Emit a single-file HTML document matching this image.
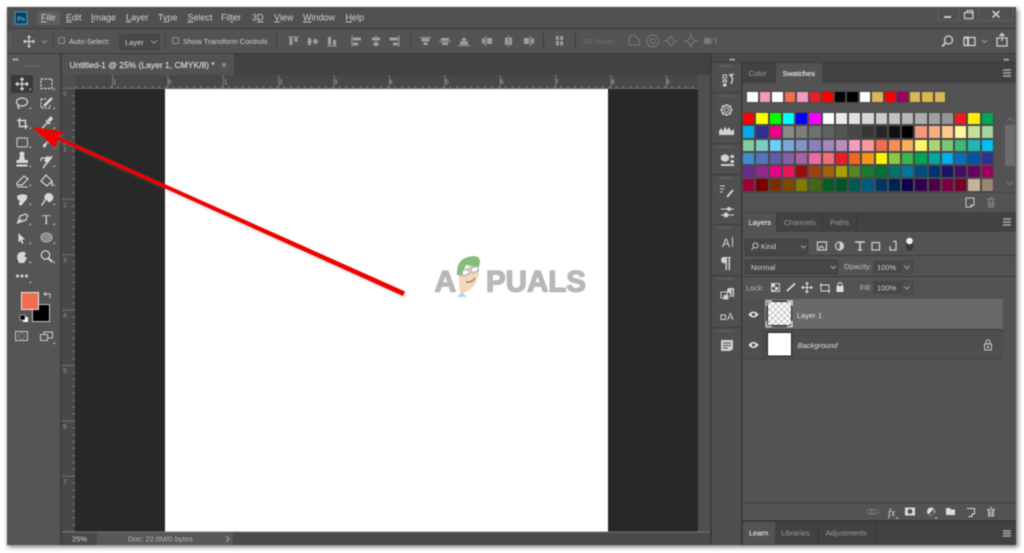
<!DOCTYPE html>
<html><head><meta charset="utf-8">
<style>
html,body{margin:0;padding:0;width:1024px;height:553px;overflow:hidden;background:#fff}
#root{position:absolute;left:0;top:0;width:1024px;height:553px;filter:blur(.5px)}
svg{position:absolute;left:0;top:0}
text{font-family:"Liberation Sans",sans-serif;font-size:9px;fill:#d0d0d0}
.sw{position:absolute;display:grid;gap:0}
.sw i{display:block;box-sizing:border-box;border:1px solid #4a4a4a}
#g{left:742px;top:112px;grid-template-columns:repeat(19,13.25px);grid-auto-rows:13.25px}
#r{left:746px;top:90.5px;grid-template-columns:repeat(16,12.5px);grid-auto-rows:12.5px;background:#444}
</style></head><body><div id="root">
<svg width="1024" height="553" viewBox="0 0 1024 553">
<defs>
<pattern id="tx" x="62" y="75" width="6.925" height="14" patternUnits="userSpaceOnUse"><rect x="0" y="11" width="1" height="3" fill="#8a8a8a"/></pattern>
<pattern id="ty" x="62" y="88" width="14" height="6.925" patternUnits="userSpaceOnUse"><rect x="10" y="0" width="3" height="1" fill="#777"/></pattern>
<pattern id="mx" x="56.6" y="75" width="55.4" height="14" patternUnits="userSpaceOnUse"><rect x="0" y="0" width="1" height="14" fill="#7a7a7a"/></pattern>
<pattern id="my" x="62" y="88" width="14" height="55.4" patternUnits="userSpaceOnUse"><rect x="0" y="0" width="13" height="1" fill="#707070"/></pattern>
<pattern id="ck" width="6" height="6" patternUnits="userSpaceOnUse" x="768" y="302"><rect width="6" height="6" fill="#fff"/><rect width="3" height="3" fill="#ccc"/><rect x="3" y="3" width="3" height="3" fill="#ccc"/></pattern>
<filter id="sh" x="-5%" y="-5%" width="110%" height="110%"><feGaussianBlur stdDeviation="2.5"/></filter>
<filter id="as" x="-5%" y="-10%" width="110%" height="120%"><feGaussianBlur stdDeviation="1.5"/></filter>
</defs>
<!-- window shadow -->
<rect x="8" y="9" width="1010" height="538" fill="#555" filter="url(#sh)" opacity=".8"/>
<rect x="7" y="7" width="1009" height="538" fill="#535353"/>
<rect x="7" y="7" width="1009" height="21" fill="#505050"/>
<rect x="7" y="28" width="1009" height="1" fill="#3c3c3c"/>
<rect x="7" y="29" width="1009" height="24" fill="#535353"/>
<rect x="7" y="53" width="1009" height="1" fill="#3c3c3c"/>

<!-- PS logo -->
<rect x="15" y="12" width="12" height="12" fill="#0f3e58" stroke="#2ea3d6" stroke-width="1"/>
<text x="17.2" y="20.8" style="font-size:6.5px;font-weight:bold;fill:#3fb3e6">Ps</text>
<rect x="37" y="11" width="23" height="14" rx="1" fill="#5e5e5e"/>
<g style="font-size:9px">
<text x="41" y="20.5"><tspan text-decoration="underline">F</tspan>ile</text>
<text x="66" y="20.5"><tspan text-decoration="underline">E</tspan>dit</text>
<text x="91" y="20.5"><tspan text-decoration="underline">I</tspan>mage</text>
<text x="126" y="20.5"><tspan text-decoration="underline">L</tspan>ayer</text>
<text x="158" y="20.5">T<tspan text-decoration="underline">y</tspan>pe</text>
<text x="187.500" y="20.5"><tspan text-decoration="underline">S</tspan>elect</text>
<text x="221" y="20.5">Fil<tspan text-decoration="underline">t</tspan>er</text>
<text x="252" y="20.5">3<tspan text-decoration="underline">D</tspan></text>
<text x="274" y="20.5"><tspan text-decoration="underline">V</tspan>iew</text>
<text x="303" y="20.5"><tspan text-decoration="underline">W</tspan>indow</text>
<text x="345.500" y="20.5"><tspan text-decoration="underline">H</tspan>elp</text>
</g>
<!-- window controls -->
<path d="M938 7.500V20.500H1013V7.500" fill="none" stroke="#5f5f5f"/>
<path d="M958.500 8V20M978.500 8V20" stroke="#5f5f5f"/>
<rect x="944" y="16" width="7" height="2" fill="#c8c8c8"/>
<path d="M964.500 12.500H973V18.500H964.500ZM967 12.500V10.500H972.500V15" fill="none" stroke="#c8c8c8" stroke-width="1.200"/>
<path d="M992.500 11L999.500 17.500M999.500 11L992.500 17.500" stroke="#c8c8c8" stroke-width="1.800"/>

<!-- options bar -->
<path d="M10 33V50" stroke="#666" stroke-dasharray="1 1" stroke-width="2"/>
<g fill="none" stroke="#d0d0d0" stroke-width="1.200"><path d="M29 36V47M23.500 41.500H34.500"/></g>
<path d="M29 35L26.800 37.500H31.200ZM29 48L26.800 45.500H31.200ZM23 41.500L25.500 39.300V43.700ZM35 41.500L32.500 39.300V43.700Z" fill="#d0d0d0"/>
<path d="M42 40.500L44.500 43L47 40.500" fill="none" stroke="#9a9a9a"/>
<path d="M53.500 33V49" stroke="#3c3c3c"/>
<rect x="58.500" y="37.500" width="6" height="6" rx="1" fill="none" stroke="#909090"/>
<text x="69" y="44" style="font-size:7.500px">Auto-Select:</text>
<rect x="119.500" y="34.500" width="40" height="15" rx="1" fill="#484848" stroke="#444"/>
<text x="125" y="45" style="font-size:7.500px">Layer</text>
<path d="M151 40.500L154 43L157 40.500" fill="none" stroke="#9a9a9a"/>
<path d="M165.500 33V49" stroke="#3c3c3c"/>
<rect x="172.500" y="37.500" width="6" height="6" rx="1" fill="none" stroke="#909090"/>
<text x="183" y="44" style="font-size:7.500px">Show Transform Controls</text>
<path d="M276.500 33V49" stroke="#3c3c3c"/>
<g fill="#a0a0a0">
<path d="M288 36.500H299V37.500H288ZM289.500 38H292.500V45H289.500ZM294.500 38H297.500V42H294.500Z"/>
<path d="M307 41H319V42H307ZM308 38H311V45H308ZM314 39H317V44H314Z"/>
<path d="M327 45.500H337V46.500H327ZM328 37H331V45H328ZM333 40H336V45H333Z"/>
<path d="M351.500 35.500H352.500V46.500H351.500ZM353 37.500H361V40.500H353ZM353 42.500H358V45.500H353Z"/>
<path d="M375.500 35.500H376.500V46.500H375.500ZM372 37.500H380V40.500H372ZM373.500 42.500H378.500V45.500H373.500Z"/>
<path d="M398.500 35.500H399.500V46.500H398.500ZM389.500 37.500H398V40.500H389.500ZM393 42.500H398V45.500H393Z"/>
</g>
<path d="M410.500 33V49" stroke="#3c3c3c"/>
<g fill="#a0a0a0">
<path d="M420 37H431V38H420ZM421.500 38.500H429.500V41.500H421.500ZM423.500 42.500H427.500V45H423.500Z"/>
<path d="M439 41H451V42H439ZM441 38H449V40.500H441ZM442 42.500H448V45H442Z"/>
<path d="M458 45H470V46H458ZM460 41.500H468V44.500H460ZM462 38H466V41H462Z"/>
<path d="M485 36H486V46H485ZM487 38H492V44H487ZM482 38.500H484.500V43.500H482Z"/>
<path d="M508 35.500H509V47H508ZM505 37.500H507.500V45H505ZM509.500 37.500H512V45H509.500Z"/>
<path d="M530 36H531V46H530ZM524 38H529V44H524ZM531.500 38.500H534V43.500H531.500Z"/>
</g>
<path d="M543.500 33V49" stroke="#3c3c3c"/>
<path d="M556 36H563V40H556ZM556 41H563V45.500H556Z" fill="#a0a0a0"/>
<path d="M559.500 36V46" stroke="#535353" stroke-width="1.500"/>
<path d="M575.500 33V49" stroke="#3c3c3c"/>
<text x="583" y="44" style="font-size:7.500px;fill:#6c6c72">3D Mode:</text>
<g fill="none" stroke="#7a7a7a" stroke-width="1">
<path d="M629 41A4 4 0 0 1 637 38A5 5 0 0 1 639 45H631A2.500 2.500 0 0 1 629 41Z"/>
<circle cx="652.500" cy="41" r="6"/><circle cx="652.500" cy="41" r="2.500"/>
<path d="M671 36L675 41L671 46L667 41ZM664 41H667M675 41H678"/>
<path d="M691 37L695 41L691 45L687 41ZM691 33V37M691 45V48M683 41H687M695 41H698"/>
</g>
<rect x="704" y="38" width="7" height="6" fill="#7a7a7a"/><path d="M711 41L716 38V44" fill="none" stroke="#7a7a7a"/>
<!-- right opts -->
<g fill="none" stroke="#d0d0d0" stroke-width="1.300">
<circle cx="948.500" cy="40" r="4"/><path d="M945.500 43L942 46.500" stroke-width="1.800"/>
<rect x="964" y="37.500" width="11" height="8"/><path d="M964.500 37.500H968V45.500" stroke-width="2"/>
<path d="M982 40L984.500 42.500L987 40" stroke="#a0a0a0" stroke-width="1"/>
<path d="M1001 38H997V46H1007V38H1003M1002 41V34M999.500 36L1002 33.500L1004.500 36"/>
</g>

<!-- top panel header strips -->
<rect x="7" y="54" width="54" height="491" fill="#555"/>
<rect x="60" y="54" width="2" height="491" fill="#3f3f3f"/>
<text x="12" y="61" style="font-size:6px;fill:#c0c0c0">◂◂</text>
<path d="M24 66H40" stroke="#6e6e6e" stroke-width="2" stroke-dasharray="1.500 1"/>

<!-- doc tab row -->
<rect x="62" y="54" width="650" height="21" fill="#424242"/>
<rect x="62" y="54" width="172" height="21" fill="#525252"/>
<text x="69.500" y="68" style="font-size:8.500px;fill:#dedede;stroke:#dedede;stroke-width:.15">Untitled-1 @ 25% (Layer 1, CMYK/8) *</text>
<path d="M222 63L226 67M226 63L222 67" stroke="#9a9a9a" stroke-width="1.200"/>

<!-- rulers -->
<rect x="62" y="75" width="650" height="14" fill="#484848"/>
<rect x="62" y="75" width="13" height="470" fill="#484848"/>
<rect x="62" y="75" width="13" height="13" fill="#4f4f4f"/>
<rect x="75" y="75" width="623" height="14" fill="url(#tx)"/>
<rect x="75" y="75" width="623" height="14" fill="url(#mx)"/>
<rect x="62" y="88" width="13" height="444" fill="url(#ty)"/>
<rect x="62" y="88" width="13" height="444" fill="url(#my)"/>
<g>
<text x="113" y="84" style="font-size:6.500px;fill:#b0b0b0">1</text><text x="168" y="84" style="font-size:6.500px;fill:#b0b0b0">0</text><text x="224" y="84" style="font-size:6.500px;fill:#b0b0b0">1</text><text x="279" y="84" style="font-size:6.500px;fill:#b0b0b0">2</text><text x="334" y="84" style="font-size:6.500px;fill:#b0b0b0">3</text><text x="389" y="84" style="font-size:6.500px;fill:#b0b0b0">4</text><text x="445" y="84" style="font-size:6.500px;fill:#b0b0b0">5</text><text x="500" y="84" style="font-size:6.500px;fill:#b0b0b0">6</text><text x="555" y="84" style="font-size:6.500px;fill:#b0b0b0">7</text><text x="611" y="84" style="font-size:6.500px;fill:#b0b0b0">8</text><text x="666" y="84" style="font-size:6.500px;fill:#b0b0b0">9</text>
<text x="63" y="96" style="font-size:6.500px;fill:#9a9a9a">0</text><text x="63" y="151.500" style="font-size:6.500px;fill:#9a9a9a">1</text><text x="63" y="207" style="font-size:6.500px;fill:#9a9a9a">2</text><text x="63" y="262" style="font-size:6.500px;fill:#9a9a9a">3</text><text x="63" y="317.500" style="font-size:6.500px;fill:#9a9a9a">4</text><text x="63" y="373" style="font-size:6.500px;fill:#9a9a9a">5</text><text x="63" y="428.500" style="font-size:6.500px;fill:#9a9a9a">6</text><text x="63" y="484" style="font-size:6.500px;fill:#9a9a9a">7</text>
</g>
<!-- canvas -->
<rect x="75" y="88" width="623" height="444" fill="#282828"/>
<rect x="75" y="88" width="623" height="1" fill="#6a6a6a"/>
<rect x="165" y="89" width="443" height="443" fill="#fff"/>
<rect x="698" y="75" width="14" height="470" fill="#4f4f4f"/>
<!-- status bar -->
<rect x="62" y="532" width="650" height="13" fill="#4a4a4a"/>
<rect x="97" y="532" width="136" height="13" fill="#585858"/>
<rect x="62" y="531.500" width="650" height="1" fill="#777"/>
<text x="72" y="541.500" style="font-size:7.500px">25%</text>
<text x="128" y="541.500" style="font-size:7.500px;fill:#b8b8b8">Doc: 22.0M/0 bytes</text>
<path d="M226 536L229 539L226 542" fill="none" stroke="#aaa"/>

<!-- toolbar icons -->
<rect x="11" y="75" width="22" height="18" rx="1" fill="#3a3a3a"/>
<g fill="none" stroke="#d8d8d8" stroke-width="1.200">
<path d="M22 78.500V89.500M16.500 84H27.500"/>
<rect x="41" y="79" width="11" height="9.500" stroke-dasharray="2.500 1.200"/>
<ellipse cx="22" cy="102" rx="5.500" ry="4"/><path d="M18 105Q17 109 20 108"/>
<path d="M41 99H46M41 99V108H50V105" stroke-dasharray="2 1.200"/><path d="M44 106L52 98" stroke-width="2.500"/>
<path d="M19.500 118V126.500H28M17 120.500H25.500V129" stroke-width="1.500"/>
<path d="M41.500 129L48 122" stroke-width="1.300"/><path d="M46 120.500L50 124" stroke-width="1.800"/><path d="M48.500 121L52 117.500" stroke-width="3.500"/>
<rect x="17" y="138" width="10.500" height="9" rx="1.500" stroke-width="1.500" stroke-dasharray="1.800 .8"/>
<path d="M43 146L51 139" stroke-width="1.500"/>
<path d="M16.500 165.500H27.500" stroke-width="2"/>
<path d="M43 168L52 156" stroke-width="1.500"/><path d="M41 158H48M41 158V161"/>
<path d="M17 183L24 176L28 179L22 185H17Z"/><path d="M17 187H28" stroke-width="1"/>
<path d="M41 181L46 175L52 181L47 186Z"/><path d="M52 182V186" stroke-width="1.500"/>
<path d="M17.500 223L20 216L26 214L27.500 215.500L26 220Z"/><path d="M18 222.500L22 219"/>
<ellipse cx="46.500" cy="237.500" rx="5.500" ry="4.500" fill="#8a8a8a" stroke="#a8a8a8"/>
<circle cx="45.500" cy="255" r="4.200"/><path d="M48.500 258.500L52.500 262" stroke-width="2"/>
</g>
<g fill="#d8d8d8">
<path d="M22 77L19.500 80H24.500ZM22 91L19.500 88H24.500ZM15 84L18 81.500V86.500ZM29 84L26 81.500V86.500Z"/>
<path d="M47.500 141L51 138L52.500 140L49 143.500ZM43 146L45 143L47 145L44 148Z"/>
<path d="M20 155.500A2.500 2.500 0 1 1 24 155.500L25 160H28V163H16.500V160H19Z"/>
<path d="M47 156L52 158L48 163L44 161Z"/>
<path d="M17 196Q21 193 27 195Q28 199 25 201L21 206L18.500 204L20 201Q17 200 17 196Z"/>
<path d="M46 194A4.500 4.500 0 1 1 48 202L46.500 199.500L42 206L41 205L45 199Q43 197 46 194Z"/>
<path d="M18.500 233L25 239.500H22L23.500 243L22 244L20.500 240.500L18.500 242.500Z"/>
<path d="M17 258Q17 253 21 252Q25 251 26 254L24 256L27 258L24 263H19Z"/>
<circle cx="17.500" cy="276" r="1.500"/><circle cx="22" cy="276" r="1.500"/><circle cx="26.500" cy="276" r="1.500"/>
<text x="42" y="224" style="font-family:'Liberation Serif',serif;font-size:14px;fill:#d8d8d8">T</text>
</g>
<g fill="#cfcfcf">
<path d="M31 88V90H29Z M55 88V90H53Z M31 107V109H29Z M55 107V109H53Z M31 127V129H29Z M55 127V129H53Z M31 146V148H29Z M55 146V148H53Z M31 165V167H29Z M55 165V167H53Z M31 184V186H29Z M55 184V186H53Z M31 203V205H29Z M55 203V205H53Z M31 223V225H29Z M55 223V225H53Z M31 242V244H29Z M55 242V244H53Z M31 261V263H29Z M55 261V263H53Z M31 281V283H29Z M55 342V344H53Z"/>
</g>
<!-- colors -->
<rect x="32.500" y="304.500" width="17" height="17" fill="#000" stroke="#c8c8c8"/>
<rect x="21.500" y="292.500" width="17" height="17" fill="#f26c4f" stroke="#e8e8e8"/>
<path d="M44 294H50V298M44 294L46 292M44 294L46 296" fill="none" stroke="#d0d0d0"/>
<rect x="23" y="317" width="5" height="5" fill="#fff"/><rect x="20" y="315" width="5" height="5" fill="#000" stroke="#ddd" stroke-width=".6"/>
<rect x="15.500" y="331.500" width="12" height="9" fill="none" stroke="#c8c8c8"/><circle cx="21.500" cy="336" r="3" fill="none" stroke="#aaa" stroke-dasharray="1 1"/>
<path d="M40.500 334.500H47.500V340.500H40.500ZM44 334V332H52.500V338H48" fill="none" stroke="#c8c8c8"/>

<!-- right strip -->
<rect x="712" y="54" width="304" height="8" fill="#484848"/>
<rect x="710" y="54" width="2" height="491" fill="#3c3c3c"/>
<rect x="712" y="62" width="30" height="483" fill="#4f4f4f"/>
<rect x="741" y="62" width="1.500" height="483" fill="#383838"/>
<text x="729" y="61" style="font-size:5.500px;fill:#c0c0c0">◂◂</text>
<text x="1004" y="61" style="font-size:5.500px;fill:#c0c0c0">▸▸</text>
<path d="M712 62.500H1016" stroke="#3c3c3c"/>
<path d="M712 92.500H741M712 143.500H741M712 174.500H741M712 224.500H741M712 275.500H741M712 327.500H741" stroke="#3c3c3c"/>
<path d="M719 66H733M719 96H733M719 147H733M719 178H733M719 228H733M719 279H733M719 331H733" stroke="#6a6a6a" stroke-width="1.500" stroke-dasharray="1.500 1"/>
<g fill="#d0d0d0" stroke="#d0d0d0">
<path d="M723 75H726.500V78H723ZM723 80H726.500V82H723Z" fill="none" stroke-width="1"/>
<rect x="723" y="83.500" width="3.500" height="3" stroke="none"/>
<path d="M729 75L732.500 74.500L731 76Q734 79 731 84" fill="none" stroke-width="1.400"/>
<circle cx="726.500" cy="110" r="5" fill="none" stroke-width="1"/>
<path d="M720 110H733M726.500 104V116M722 105.500L731 114.500M731 105.500L722 114.500" stroke-width="1" fill="none"/>
<circle cx="726.500" cy="110" r="1.500" stroke="none" fill="#535353"/>
<path d="M719 135V131L721 128L723 131L725 126.500L727 130L729 127L731 131L734 129V135Z" stroke="none"/>
<path d="M721 156L725 154L729 156V160L725 162L721 160Z" stroke="none"/>
<rect x="730.500" y="155" width="3.500" height="3" stroke="none"/><rect x="730.500" y="160" width="3.500" height="3" stroke="none"/>
<rect x="721" y="164" width="13" height="2" stroke="none"/>
<path d="M727 197L733 190" stroke-width="2" fill="none"/>
<path d="M720 186H725M720 189H724M720 192H723" stroke-width="1" fill="none"/>
<path d="M721 209H728M730 209H734M721 215H724M728 215H734" stroke-width="1" fill="none"/>
<circle cx="729" cy="209" r="2" stroke="none"/><circle cx="726" cy="215" r="2.500" stroke="none"/>
<path d="M732.500 237V247" stroke-width="1" fill="none"/>
<path d="M723 257H731V258H730V270H728.500V258H727V270H725.500V263A3 3 0 0 1 723 257Z" stroke="none"/>
<rect x="721" y="292" width="6" height="6" fill="none" stroke-width="1"/><rect x="723.500" y="295" width="5" height="4.500" stroke="none"/>
<path d="M729 288H734V297H732.500V289.500H731.500V297H730V293A2.500 2.500 0 0 1 729 288Z" stroke="none"/>
<rect x="721" y="315" width="4.500" height="4.500" fill="none" stroke-width="1"/>
<path d="M721 340H733V349L730 351H721Z" stroke="none"/>
</g>
<path d="M723 343H731M723 345.500H731M723 348H728" stroke="#4f4f4f"/>
<text x="722" y="247" style="font-size:12px;fill:#d0d0d0">A</text>
<text x="727" y="320" style="font-size:10px;fill:#d0d0d0">A</text>

<!-- swatches panel tabs -->
<rect x="742.500" y="63" width="273.500" height="20" fill="#424242"/>
<rect x="776" y="63" width="46" height="20" fill="#535353"/>
<text x="748.500" y="76" style="font-size:7.500px;fill:#9a9a9a">Color</text>
<text x="782.500" y="76" style="font-size:7.500px;fill:#ececec;stroke:#ececec;stroke-width:.12">Swatches</text>
<path d="M1003 70H1011M1003 73H1011M1003 76H1011" stroke="#a8a8a8" stroke-width="1.400"/>
<path d="M1006.500 121L1010 118L1013.500 121" fill="none" stroke="#777"/>
<rect x="1005" y="125" width="10" height="41" fill="#6c6c6c"/>
<path d="M1006.500 182L1010 185L1013.500 182" fill="none" stroke="#777"/>
<path d="M742 192.500H1016" stroke="#484848"/>
<path d="M966 198H974V205H971V207H966V198Z" fill="none" stroke="#c8c8c8"/><path d="M971 205L974 205L971 207.500Z" fill="#c8c8c8"/>
<path d="M987 199H995M988.500 200V207H993.500V200M990 197.500H992M990 201V206M992 201V206" fill="none" stroke="#8a8a8a"/>

<!-- layers panel tabs -->
<rect x="742.500" y="212" width="273.500" height="20" fill="#424242"/>
<rect x="743" y="213" width="33" height="19" fill="#535353"/>
<text x="748.500" y="225" style="font-size:7.500px;fill:#ececec;stroke:#ececec;stroke-width:.12">Layers</text>
<text x="784" y="225" style="font-size:7.500px;fill:#9a9a9a">Channels</text>
<text x="830" y="225" style="font-size:7.500px;fill:#9a9a9a">Paths</text>
<path d="M776.500 213V232M822.500 213V232M856.500 213V232" stroke="#383838"/>
<path d="M1003 219H1011M1003 222H1011M1003 225H1011" stroke="#a8a8a8" stroke-width="1.400"/>
<rect x="745" y="239" width="63" height="15" rx="2" fill="#474747" stroke="#404040"/>
<circle cx="755.500" cy="245.500" r="2.500" fill="none" stroke="#ccc"/><path d="M753.500 247.500L751.500 250" stroke="#ccc"/>
<text x="761" y="249" style="font-size:7.500px">Kind</text>
<path d="M801 245.500L803.500 248L806 245.500" fill="none" stroke="#a0a0a0"/>
<g fill="none" stroke="#cfcfcf" stroke-width="1.200">
<rect x="817.500" y="242" width="9" height="8"/><path d="M819 248.500L821.500 246L824 248.500"/>
<circle cx="839.500" cy="246" r="4"/>
<path d="M855 242H865M860 242V250M858 250H862" stroke-width="1.600"/>
<rect x="872" y="242.500" width="7.500" height="7.500"/>
<path d="M890 246V250H896V241.500H893"/>
</g>
<path d="M839.500 242A4 4 0 0 1 839.500 250Z" fill="#cfcfcf"/>
<rect x="906" y="239" width="7" height="12" rx="3.500" fill="#3a3a3a"/><circle cx="909.500" cy="241" r="3.300" fill="#eee"/>
<path d="M742 255.500H1016" stroke="#3c3c3c"/>
<rect x="745" y="260" width="93" height="14" rx="2" fill="#474747" stroke="#404040"/>
<text x="751" y="270" style="font-size:7.500px">Normal</text>
<path d="M831 266L833.500 268.500L836 266" fill="none" stroke="#a0a0a0"/>
<text x="844" y="269" style="font-size:7.500px;fill:#c0c0c0">Opacity:</text>
<rect x="873.500" y="260.500" width="28" height="13" fill="#474747"/><rect x="901.500" y="260.500" width="11" height="13" fill="#4e4e4e" stroke="#444"/>
<text x="877" y="270" style="font-size:7.500px">100%</text>
<path d="M904.500 266L907 268.500L909.500 266" fill="none" stroke="#a0a0a0"/>
<path d="M742 276.500H1016" stroke="#3c3c3c"/>
<text x="746" y="290.500" style="font-size:7.500px;fill:#b8b8b8">Lock:</text>
<rect x="771.500" y="283.500" width="8" height="8" fill="none" stroke="#ccc"/>
<path d="M772 284H775V287H772ZM775 287H778V290H775ZM772 290H775V291H772Z" fill="#ddd"/>
<path d="M787 291L795 283.500" stroke="#ddd" stroke-width="1.800"/>
<path d="M807 282V293M801.500 287.500H812.500" stroke="#ddd"/>
<path d="M807 281.500L805 284H809ZM807 293.500L805 291H809ZM801 287.500L803.500 285.500V289.500ZM813 287.500L810.500 285.500V289.500Z" fill="#ddd"/>
<path d="M820 285H829V293M821 283V291H830" fill="none" stroke="#ddd"/>
<rect x="836.500" y="286" width="7" height="6" fill="#ddd"/><path d="M838 286V284.500A2 2 0 0 1 842 284.500V286" fill="none" stroke="#ddd"/>
<text x="860" y="290" style="font-size:7.500px;fill:#c0c0c0">Fill:</text>
<rect x="873.500" y="281" width="28" height="13" fill="#474747"/><rect x="901.500" y="281" width="11" height="13" fill="#4e4e4e" stroke="#444"/>
<text x="877" y="290.500" style="font-size:7.500px">100%</text>
<path d="M904.500 286.500L907 289L909.500 286.500" fill="none" stroke="#a0a0a0"/>
<rect x="743" y="299" width="260" height="30" fill="#535353"/>
<rect x="764" y="299" width="239" height="30" fill="#696969"/>
<rect x="743" y="299" width="21" height="30" fill="#4f4f4f"/>
<rect x="743" y="329.500" width="260" height="30" fill="#4e4e4e"/>
<path d="M764 329.500H1003" stroke="#3e3e3e"/>
<path d="M763.500 299V359M743 359.500H1003" stroke="#444"/>
<path d="M749 314.500Q753.500 309.500 758 314.500Q753.500 319.500 749 314.500Z" fill="#ddd" stroke="#ddd"/><circle cx="753.500" cy="314.500" r="1.500" fill="#444"/>
<path d="M749 345Q753.500 340 758 345Q753.500 350 749 345Z" fill="#ddd" stroke="#ddd"/><circle cx="753.500" cy="345" r="1.500" fill="#444"/>
<rect x="767.500" y="301.500" width="24" height="24" fill="url(#ck)" stroke="#222"/>
<path d="M772 301H766.500V306M787 301H792V306M766.500 321V326.500H772M792 321V326.500H787" fill="none" stroke="#eee" stroke-width="1.200"/>
<rect x="767.500" y="332.500" width="24" height="23.500" fill="#fff" stroke="#222"/>
<text x="797" y="318" style="font-size:7.500px;fill:#e0e0e0">Layer 1</text>
<text x="797.500" y="348" style="font-size:7.500px;font-style:italic;fill:#e0e0e0">Background</text>
<rect x="984.500" y="344" width="7" height="6" fill="none" stroke="#ccc"/><path d="M986 344V342A2 2 0 0 1 990 342V344" fill="none" stroke="#ccc"/><rect x="987" y="346" width="2" height="2" fill="#ccc"/>
<path d="M742 503H1016" stroke="#404040"/>
<path d="M742 521H1016" stroke="#333" stroke-width="1.500"/>
<rect x="867" y="509.500" width="7" height="4.500" rx="2.200" fill="none" stroke="#7a7a7a"/><rect x="871" y="509.500" width="7" height="4.500" rx="2.200" fill="none" stroke="#7a7a7a"/>
<text x="888" y="516" style="font-family:'Liberation Serif',serif;font-style:italic;font-size:10px;fill:#d8d8d8">fx</text>
<rect x="905" y="507.500" width="10" height="8" fill="#ddd"/><circle cx="910" cy="511.500" r="2.500" fill="#535353"/>
<circle cx="931" cy="511.500" r="4" fill="#ddd"/><path d="M928 515L934 508.500V515Z" fill="#535353"/>
<path d="M946 508H950L951 509.500H955V515H946Z" fill="#ddd"/>
<path d="M967 508.500H974.500V514H972V516.500H968.500" fill="none" stroke="#ddd"/>
<path d="M987 509.500H995M988.500 510V516H993.500V510M990 507.500H992M990 511V515M992 511V515" fill="none" stroke="#ccc"/>
<path d="M896 518H898M935 518H937" stroke="#ddd"/>
<rect x="742.500" y="522" width="273.500" height="23" fill="#424242"/>
<rect x="743" y="522" width="32" height="22" fill="#535353"/>
<text x="749" y="535.500" style="font-size:7.500px;fill:#ececec;stroke:#ececec;stroke-width:.12">Learn</text>
<text x="781" y="535.500" style="font-size:7.500px;fill:#9a9a9a">Libraries</text>
<text x="825.500" y="535.500" style="font-size:7.500px;fill:#9a9a9a">Adjustments</text>
<path d="M818.500 522V544M876.500 522V544" stroke="#383838"/>
<path d="M1003 531H1011M1003 533.500H1011M1003 536H1011" stroke="#a8a8a8" stroke-width="1.400"/>

<!-- watermark -->
<text x="434.500" y="291.500" style="font-size:30px;font-weight:bold;fill:#b8b8b8;stroke:#b8b8b8;stroke-width:1.400;stroke-linejoin:round">A</text>
<text x="486" y="291.500" style="font-size:30px;font-weight:bold;fill:#b8b8b8;stroke:#b8b8b8;stroke-width:1.400;stroke-linejoin:round" textLength="100" lengthAdjust="spacingAndGlyphs">PUALS</text>
<path d="M459 274Q459 292 461 294L468 291Q479 284 479 268L472 264Z" fill="#f4d6b8"/>
<path d="M457 275Q456 260 468 257Q480 254 480 262L479 267L466 265L461 276Z" fill="#86bd78"/>
<path d="M462 271L468 269L469 274L463 276ZM471 268L478 266L478 271L472 273Z" fill="#fff" stroke="#9aa8b4"/>
<path d="M466 282Q472 283 475 278" fill="none" stroke="#665"/>
<path d="M457 297L462 292L467 297Z" fill="#b4d6e8"/>

<!-- arrow -->
<path d="M404 297L59 141L56 150L33 129L65 134L60 138L404 293Z" fill="#777" filter="url(#as)" opacity=".5"/>
<path d="M403 296L58 140L55 148L32 127L65 132L57 136L405 291.500Z" fill="#f00000"/>
</svg>
<div class="sw" id="r"><i style="background:#fff"></i><i style="background:#f49ac1"></i><i style="background:#fff"></i><i style="background:#f26c4f"></i><i style="background:#f49ac1"></i><i style="background:#ed1c24"></i><i style="background:#f00"></i><i style="background:#000"></i><i style="background:#000"></i><i style="background:#fff"></i><i style="background:#d9b654"></i><i style="background:#f00"></i><i style="background:#9e005d"></i><i style="background:#d9b654"></i><i style="background:#d9b654"></i><i style="background:#d9b654"></i></div>
<div class="sw" id="g">
<i style="background:#f00"></i><i style="background:#ff0"></i><i style="background:#0f0"></i><i style="background:#0ff"></i><i style="background:#00f"></i><i style="background:#f0f"></i><i style="background:#fff"></i><i style="background:#ebebeb"></i><i style="background:#e1e1e1"></i><i style="background:#d7d7d7"></i><i style="background:#ccc"></i><i style="background:#c2c2c2"></i><i style="background:#b7b7b7"></i><i style="background:#acacac"></i><i style="background:#a1a1a1"></i><i style="background:#959595"></i><i style="background:#ed1c24"></i><i style="background:#fff200"></i><i style="background:#00a651"></i>
<i style="background:#00aeef"></i><i style="background:#2e3192"></i><i style="background:#ec008c"></i><i style="background:#898989"></i><i style="background:#7d7d7d"></i><i style="background:#707070"></i><i style="background:#626262"></i><i style="background:#555"></i><i style="background:#464646"></i><i style="background:#363636"></i><i style="background:#262626"></i><i style="background:#111"></i><i style="background:#000"></i><i style="background:#f7977a"></i><i style="background:#fbad82"></i><i style="background:#fdc68c"></i><i style="background:#fff799"></i><i style="background:#c6df9c"></i><i style="background:#a4d49d"></i>
<i style="background:#81ca9d"></i><i style="background:#7bcdc9"></i><i style="background:#6ccff7"></i><i style="background:#7ca6d8"></i><i style="background:#8293ca"></i><i style="background:#8881be"></i><i style="background:#a286bd"></i><i style="background:#bc8dbf"></i><i style="background:#f49bc1"></i><i style="background:#f5999d"></i><i style="background:#f26c4f"></i><i style="background:#f68e55"></i><i style="background:#fbaf5c"></i><i style="background:#fff467"></i><i style="background:#acd372"></i><i style="background:#7cc576"></i><i style="background:#3bb878"></i><i style="background:#1abbb4"></i><i style="background:#00bff3"></i>
<i style="background:#438cca"></i><i style="background:#5574b9"></i><i style="background:#5c5eaa"></i><i style="background:#855fa8"></i><i style="background:#a763a8"></i><i style="background:#ee6aa7"></i><i style="background:#f26d7d"></i><i style="background:#ed1c24"></i><i style="background:#f26522"></i><i style="background:#f7941d"></i><i style="background:#fff200"></i><i style="background:#8dc63f"></i><i style="background:#39b54a"></i><i style="background:#00a651"></i><i style="background:#00a99d"></i><i style="background:#00aeef"></i><i style="background:#0072bc"></i><i style="background:#0054a6"></i><i style="background:#2e3192"></i>
<i style="background:#662d91"></i><i style="background:#92278f"></i><i style="background:#ec008c"></i><i style="background:#ed145b"></i><i style="background:#9e0b0f"></i><i style="background:#a0410d"></i><i style="background:#a36209"></i><i style="background:#aba000"></i><i style="background:#598527"></i><i style="background:#197b30"></i><i style="background:#007236"></i><i style="background:#00746b"></i><i style="background:#0076a3"></i><i style="background:#004b80"></i><i style="background:#003471"></i><i style="background:#1b1464"></i><i style="background:#440e62"></i><i style="background:#630460"></i><i style="background:#9e005d"></i>
<i style="background:#9e0039"></i><i style="background:#790000"></i><i style="background:#7b2e00"></i><i style="background:#7d4900"></i><i style="background:#827b00"></i><i style="background:#406618"></i><i style="background:#005e20"></i><i style="background:#005826"></i><i style="background:#005952"></i><i style="background:#005b7f"></i><i style="background:#003663"></i><i style="background:#002157"></i><i style="background:#0d004c"></i><i style="background:#32004b"></i><i style="background:#4b0049"></i><i style="background:#7b0046"></i><i style="background:#7a0026"></i><i style="background:#c7b299"></i><i style="background:#998675"></i>
</div>
</div></body></html>
